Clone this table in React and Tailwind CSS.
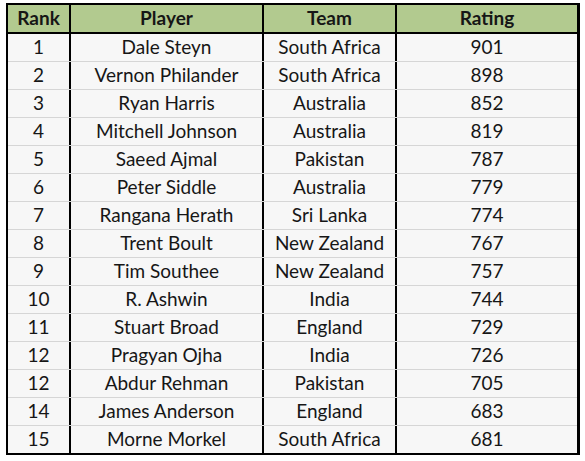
const ROWS = [
  ["1", "Dale Steyn", "South Africa", "901"],
  ["2", "Vernon Philander", "South Africa", "898"],
  ["3", "Ryan Harris", "Australia", "852"],
  ["4", "Mitchell Johnson", "Australia", "819"],
  ["5", "Saeed Ajmal", "Pakistan", "787"],
  ["6", "Peter Siddle", "Australia", "779"],
  ["7", "Rangana Herath", "Sri Lanka", "774"],
  ["8", "Trent Boult", "New Zealand", "767"],
  ["9", "Tim Southee", "New Zealand", "757"],
  ["10", "R. Ashwin", "India", "744"],
  ["11", "Stuart Broad", "England", "729"],
  ["12", "Pragyan Ojha", "India", "726"],
  ["12", "Abdur Rehman", "Pakistan", "705"],
  ["14", "James Anderson", "England", "683"],
  ["15", "Morne Morkel", "South Africa", "681"],
];

// column widths incl. the right divider
const COLS = [
  "w-[63px] border-r-2 border-black",
  "w-[193px] border-r-2 border-black",
  "w-[133px] border-r-2 border-black",
  "flex-1",
];

export default function App() {
  return (
    <div className="w-[585px] h-[461px] bg-white pt-[3px] pl-[6px] font-['Lato','Open_Sans',sans-serif] text-[#161616]">
      <div className="w-[574px] border-2 border-r-[3px] border-black bg-[#f7f7f7]">
        {/* Header */}
        <div className="flex h-[29px] bg-[#b2ca8f] border-b-2 border-black text-[19px] font-bold">
          {["Rank", "Player", "Team", "Rating"].map((h, i) => (
            <div key={h} className={`${COLS[i]} flex items-center justify-center`}>
              {h}
            </div>
          ))}
        </div>

        {/* Rows */}
        {ROWS.map((r, ri) => (
          <div
            key={ri}
            className={`flex text-[19px] ${
              ri < ROWS.length - 1 ? "h-[28px] border-b border-[#d6d6d6]" : "h-[27px]"
            }`}
          >
            {r.map((c, ci) => (
              <div key={ci} className={`${COLS[ci]} flex items-center justify-center`}>
                {c}
              </div>
            ))}
          </div>
        ))}
      </div>
    </div>
  );
}
